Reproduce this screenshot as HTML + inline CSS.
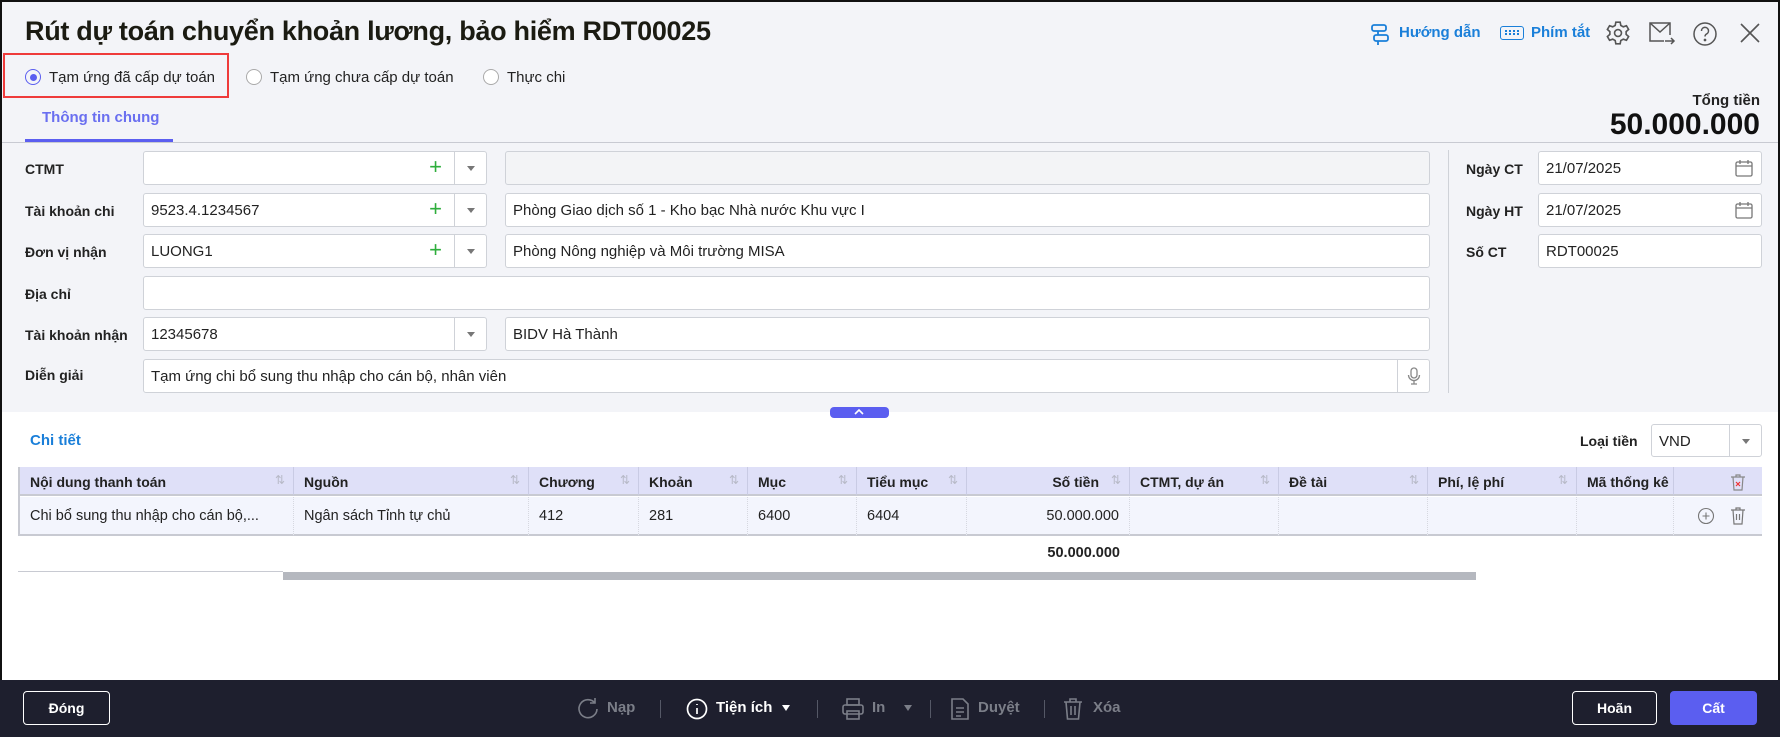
<!DOCTYPE html>
<html><head><meta charset="utf-8"><style>
*{box-sizing:border-box;margin:0;padding:0}
body{width:1780px;height:737px;overflow:hidden;font-family:"Liberation Sans",sans-serif;color:#222;background:#fff;position:relative}
.a{position:absolute}
.page{position:absolute;left:0;top:0;width:1780px;height:737px;border-left:2px solid #111;border-top:2px solid #111;border-right:2px solid #111}
.gray{position:absolute;left:2px;top:2px;width:1776px;height:410px;background:#f3f4f8}
.lbl{position:absolute;font-size:14px;font-weight:bold;color:#222}
.inp{position:absolute;height:34px;background:#fff;border:1px solid #cfd2d8;border-radius:3px;font-size:15px;padding:8px 7px;color:#222}
.dis{background:#f3f4f6}
.dd{position:absolute;top:0;right:0;width:32px;height:32px;border-left:1px solid #cfd2d8}
.dd:after{content:"";position:absolute;left:12px;top:14px;border-left:4px solid transparent;border-right:4px solid transparent;border-top:5px solid #777}
.plus{position:absolute;right:44px;top:3px;color:#2eae3c;font-size:22px;line-height:24px}
.th{position:absolute;top:467px;height:29px;background:#dfe0f8;border-right:1px solid #c9cbe4;font-size:14px;font-weight:bold;padding:7px 10px;border-bottom:2px solid #c8cad2}
.th i{position:absolute;right:8px;top:6px;font-style:normal;color:#b8bac8;font-size:12px;font-weight:normal}
.td{position:absolute;top:497px;height:39px;background:#f3f5fd;border-right:1px dotted #d6d8e0;font-size:14.5px;padding:11px 10px;border-bottom:2px solid #c8cad2}
.btn{position:absolute;top:691px;height:34px;border:1px solid #fff;border-radius:4px;color:#fff;font-weight:bold;font-size:14px;text-align:center;line-height:32px}
.tool{position:absolute;top:699px;font-size:15px;color:#7b7e88;font-weight:bold}
.sep{position:absolute;top:700px;width:1px;height:18px;background:#555866}
</style></head><body>
<div class="page"></div>
<div class="gray"></div>
<div class="a" style="left:25px;top:16px;font-size:27px;font-weight:bold;color:#1b1b12;letter-spacing:-0.3px">Rút dự toán chuyển khoản lương, bảo hiểm RDT00025</div>
<div class="a" style="left:1370px;top:22px;width:20px;height:24px">
<svg width="20" height="24" viewBox="0 0 20 24" fill="none" stroke="#1a7fd9" stroke-width="1.8"><rect x="2" y="3" width="14" height="6" rx="2"/><rect x="4" y="13" width="14" height="6" rx="2"/><path d="M8 9v4M8 19v4"/></svg></div>
<div class="a" style="left:1399px;top:24px;font-size:15px;font-weight:bold;color:#1a7fd9">Hướng dẫn</div>
<div class="a" style="left:1500px;top:26px;width:24px;height:14px;border:1.8px solid #1a7fd9;border-radius:3px"></div>
<div class="a" style="left:1505px;top:30px;width:14px;height:5px;border-top:2px dotted #1a7fd9;border-bottom:2px dotted #1a7fd9"></div>
<div class="a" style="left:1531px;top:24px;font-size:15px;font-weight:bold;color:#1a7fd9">Phím tắt</div>
<svg class="a" style="left:1605px;top:20px" width="26" height="26" viewBox="0 0 24 24" fill="none" stroke="#555" stroke-width="1.5"><circle cx="12" cy="12" r="3.2"/><path d="M10 2h4l.6 3 2.3 1.3 2.9-1 2 3.4-2.3 2v2.6l2.3 2-2 3.4-2.9-1-2.3 1.3-.6 3h-4l-.6-3-2.3-1.3-2.9 1-2-3.4 2.3-2v-2.6l-2.3-2 2-3.4 2.9 1L9.4 5z"/></svg>
<svg class="a" style="left:1648px;top:21px" width="28" height="26" viewBox="0 0 28 26" fill="none" stroke="#555" stroke-width="1.5"><path d="M22 14V2H2v18h14"/><path d="M2 2l10 9 10-9"/><path d="M17 20h9M23 17l3 3-3 3"/></svg>
<svg class="a" style="left:1692px;top:21px" width="26" height="26" viewBox="0 0 26 26" fill="none" stroke="#555" stroke-width="1.5"><circle cx="13" cy="13" r="11"/><path d="M9.5 10a3.5 3.5 0 1 1 5 3c-1 .6-1.5 1.2-1.5 2.5"/><circle cx="13" cy="19" r=".6" fill="#555"/></svg>
<svg class="a" style="left:1740px;top:23px" width="20" height="20" viewBox="0 0 20 20" stroke="#555" stroke-width="1.6"><path d="M1 1l18 18M19 1L1 19"/></svg>
<div class="a" style="left:3px;top:53px;width:226px;height:45px;border:2px solid #ef3b3b"></div>
<div class="a" style="left:25px;top:69px;width:16px;height:16px;border:1.5px solid #5b5ef0;border-radius:50%"></div>
<div class="a" style="left:29.5px;top:73.5px;width:7px;height:7px;background:#5b5ef0;border-radius:50%"></div>
<div class="a" style="left:49px;top:69px;font-size:15px">Tạm ứng đã cấp dự toán</div>
<div class="a" style="left:246px;top:69px;width:16px;height:16px;border:1px solid #aaa;border-radius:50%;background:#fff"></div>
<div class="a" style="left:270px;top:69px;font-size:15px">Tạm ứng chưa cấp dự toán</div>
<div class="a" style="left:483px;top:69px;width:16px;height:16px;border:1px solid #aaa;border-radius:50%;background:#fff"></div>
<div class="a" style="left:507px;top:69px;font-size:15px">Thực chi</div>
<div class="a" style="left:42px;top:109px;font-size:15px;font-weight:bold;color:#6a6ff0">Thông tin chung</div>
<div class="a" style="left:25px;top:139px;width:148px;height:3px;background:#5b5ef0"></div>
<div class="a" style="left:2px;top:142px;width:1776px;height:1px;background:#c8cad2"></div>
<div class="a" style="right:20px;top:92px;font-size:15px;font-weight:bold">Tổng tiền</div>
<div class="a" style="right:20px;top:108px;font-size:30px;font-weight:bold;color:#111">50.000.000</div>
<div class="lbl" style="left:25px;top:161px">CTMT</div>
<div class="inp" style="left:143px;top:151px;width:344px"><span class="plus">+</span><span class="dd"></span></div>
<div class="inp dis" style="left:505px;top:151px;width:925px"></div>
<div class="lbl" style="left:25px;top:203px">Tài khoản chi</div>
<div class="inp" style="left:143px;top:193px;width:344px">9523.4.1234567<span class="plus">+</span><span class="dd"></span></div>
<div class="inp" style="left:505px;top:193px;width:925px">Phòng Giao dịch số 1 - Kho bạc Nhà nước Khu vực I</div>
<div class="lbl" style="left:25px;top:244px">Đơn vị nhận</div>
<div class="inp" style="left:143px;top:234px;width:344px">LUONG1<span class="plus">+</span><span class="dd"></span></div>
<div class="inp" style="left:505px;top:234px;width:925px">Phòng Nông nghiệp và Môi trường MISA</div>
<div class="lbl" style="left:25px;top:286px">Địa chỉ</div>
<div class="inp" style="left:143px;top:276px;width:1287px"></div>
<div class="lbl" style="left:25px;top:327px">Tài khoản nhận</div>
<div class="inp" style="left:143px;top:317px;width:344px">12345678<span class="dd"></span></div>
<div class="inp" style="left:505px;top:317px;width:925px">BIDV Hà Thành</div>
<div class="lbl" style="left:25px;top:367px">Diễn giải</div>
<div class="inp" style="left:143px;top:359px;width:1287px">Tạm ứng chi bổ sung thu nhập cho cán bộ, nhân viên<span style="position:absolute;right:0;top:0;width:32px;height:32px;border-left:1px solid #cfd2d8"><svg style="position:absolute;left:9px;top:7px" width="14" height="18" viewBox="0 0 14 18" fill="none" stroke="#888" stroke-width="1.3"><rect x="4" y="1" width="6" height="10" rx="3"/><path d="M1.5 8a5.5 5.5 0 0 0 11 0M7 13.5V17M4 17h6"/></svg></span></div>
<div class="a" style="left:1448px;top:150px;width:1px;height:243px;background:#cfd2d8"></div>
<div class="lbl" style="left:1466px;top:161px">Ngày CT</div>
<div class="inp" style="left:1538px;top:151px;width:224px">21/07/2025</div>
<div class="lbl" style="left:1466px;top:203px">Ngày HT</div>
<div class="inp" style="left:1538px;top:193px;width:224px">21/07/2025</div>
<svg class="a" style="left:1735px;top:159px" width="18" height="18" viewBox="0 0 18 18" fill="none" stroke="#777" stroke-width="1.3"><rect x="1" y="3" width="16" height="14" rx="1.5"/><path d="M1 7h16M5 1v4M13 1v4"/></svg>
<svg class="a" style="left:1735px;top:201px" width="18" height="18" viewBox="0 0 18 18" fill="none" stroke="#777" stroke-width="1.3"><rect x="1" y="3" width="16" height="14" rx="1.5"/><path d="M1 7h16M5 1v4M13 1v4"/></svg>
<div class="lbl" style="left:1466px;top:244px">Số CT</div>
<div class="inp" style="left:1538px;top:234px;width:224px">RDT00025</div>
<div class="a" style="left:830px;top:407px;width:59px;height:11px;background:#5b5ef0;border-radius:4px"></div>
<svg class="a" style="left:853px;top:408px" width="12" height="8" viewBox="0 0 12 8" fill="none" stroke="#fff" stroke-width="1.6"><path d="M2 6l4-4 4 4"/></svg>
<div class="a" style="left:30px;top:432px;font-size:15px;font-weight:bold;color:#1a7fd9">Chi tiết</div>
<div class="lbl" style="left:1580px;top:433px">Loại tiền</div>
<div class="inp" style="left:1651px;top:424px;width:111px;height:33px">VND<span class="dd" style="height:31px"></span></div>
<div class="a" style="left:18px;top:467px;width:2px;height:69px;background:#c8cad2"></div>
<div class="th" style="left:20px;width:274px">Nội dung thanh toán<i>⇅</i></div>
<div class="th" style="left:294px;width:235px">Nguồn<i>⇅</i></div>
<div class="th" style="left:529px;width:110px">Chương<i>⇅</i></div>
<div class="th" style="left:639px;width:109px">Khoản<i>⇅</i></div>
<div class="th" style="left:748px;width:109px">Mục<i>⇅</i></div>
<div class="th" style="left:857px;width:110px">Tiểu mục<i>⇅</i></div>
<div class="th" style="left:967px;width:163px;text-align:right;padding-right:30px">Số tiền<i>⇅</i></div>
<div class="th" style="left:1130px;width:149px">CTMT, dự án<i>⇅</i></div>
<div class="th" style="left:1279px;width:149px">Đề tài<i>⇅</i></div>
<div class="th" style="left:1428px;width:149px">Phí, lệ phí<i>⇅</i></div>
<div class="th" style="left:1577px;width:97px;overflow:hidden;white-space:nowrap">Mã thống kê</div>
<div class="th" style="left:1674px;width:88px;border-right:none"></div>
<svg class="a" style="left:1730px;top:473px" width="16" height="18" viewBox="0 0 16 18" fill="none" stroke="#888" stroke-width="1.2"><path d="M1 4h14M6 4V2h4v2M3 4l1 13h8l1-13"/><path d="M6 9l4 4M10 9l-4 4" stroke="#e33"/></svg>
<div class="td" style="left:20px;width:274px">Chi bổ sung thu nhập cho cán bộ,...</div>
<div class="td" style="left:294px;width:235px">Ngân sách Tỉnh tự chủ</div>
<div class="td" style="left:529px;width:110px">412</div>
<div class="td" style="left:639px;width:109px">281</div>
<div class="td" style="left:748px;width:109px">6400</div>
<div class="td" style="left:857px;width:110px">6404</div>
<div class="td" style="left:967px;width:163px;text-align:right">50.000.000</div>
<div class="td" style="left:1130px;width:149px"></div>
<div class="td" style="left:1279px;width:149px"></div>
<div class="td" style="left:1428px;width:149px"></div>
<div class="td" style="left:1577px;width:97px"></div>
<div class="td" style="left:1674px;width:88px;border-right:none"></div>
<svg class="a" style="left:1697px;top:507px" width="18" height="18" viewBox="0 0 18 18" fill="none" stroke="#777" stroke-width="1.1"><circle cx="9" cy="9" r="7.5"/><path d="M9 5.5v7M5.5 9h7"/></svg>
<svg class="a" style="left:1730px;top:506px" width="16" height="19" viewBox="0 0 16 19" fill="none" stroke="#777" stroke-width="1.2"><path d="M1 4h14M6 4V2h4v2M3 4l1 14h8l1-14M6.5 8v6M9.5 8v6"/></svg>
<div class="a" style="left:967px;top:545px;width:163px;text-align:right;padding-right:10px;font-size:14.5px;font-weight:bold">50.000.000</div>
<div class="a" style="left:18px;top:571px;width:265px;height:1px;background:#c8cad2"></div>
<div class="a" style="left:283px;top:572px;width:1193px;height:8px;background:#b5b8bf"></div>
<div class="a" style="left:0;top:680px;width:1780px;height:57px;background:#1e1f2e"></div>
<div class="btn" style="left:23px;width:87px">Đóng</div>
<svg class="a" style="left:577px;top:697px" width="22" height="24" viewBox="0 0 22 24" fill="none" stroke="#7b7e88" stroke-width="1.6"><path d="M18 6A9 9 0 1 0 20 12"/><path d="M18 1v5h-5"/></svg>
<div class="tool" style="left:607px">Nạp</div>
<div class="sep" style="left:660px"></div>
<svg class="a" style="left:686px;top:698px" width="22" height="22" viewBox="0 0 22 22" fill="none" stroke="#fff" stroke-width="1.7"><circle cx="11" cy="11" r="9.5"/><path d="M11 6v1M11 10v6"/></svg>
<div class="tool" style="left:716px;color:#fff">Tiện ích</div>
<div class="a" style="left:782px;top:705px;border-left:4px solid transparent;border-right:4px solid transparent;border-top:6px solid #fff"></div>
<div class="sep" style="left:817px"></div>
<svg class="a" style="left:841px;top:697px" width="24" height="24" viewBox="0 0 24 24" fill="none" stroke="#7b7e88" stroke-width="1.6"><rect x="6" y="2" width="12" height="6"/><rect x="2" y="8" width="20" height="9" rx="2"/><rect x="6" y="14" width="12" height="8"/></svg>
<div class="tool" style="left:872px">In</div>
<div class="a" style="left:904px;top:705px;border-left:4px solid transparent;border-right:4px solid transparent;border-top:6px solid #7b7e88"></div>
<div class="sep" style="left:930px"></div>
<svg class="a" style="left:950px;top:697px" width="20" height="24" viewBox="0 0 20 24" fill="none" stroke="#7b7e88" stroke-width="1.6"><path d="M2 2h11l5 5v15H2z"/><path d="M6 11h8M6 15h8M6 19h5"/></svg>
<div class="tool" style="left:978px">Duyệt</div>
<div class="sep" style="left:1044px"></div>
<svg class="a" style="left:1063px;top:697px" width="20" height="24" viewBox="0 0 20 24" fill="none" stroke="#7b7e88" stroke-width="1.6"><path d="M1 5h18M7 5V2h6v3M3 5l1.5 17h11L17 5M8 9v9M12 9v9"/></svg>
<div class="tool" style="left:1093px">Xóa</div>
<div class="btn" style="left:1572px;width:85px">Hoãn</div>
<div class="btn" style="left:1670px;width:87px;background:#5b5ef0;border-color:#5b5ef0">Cất</div>
</body></html>
